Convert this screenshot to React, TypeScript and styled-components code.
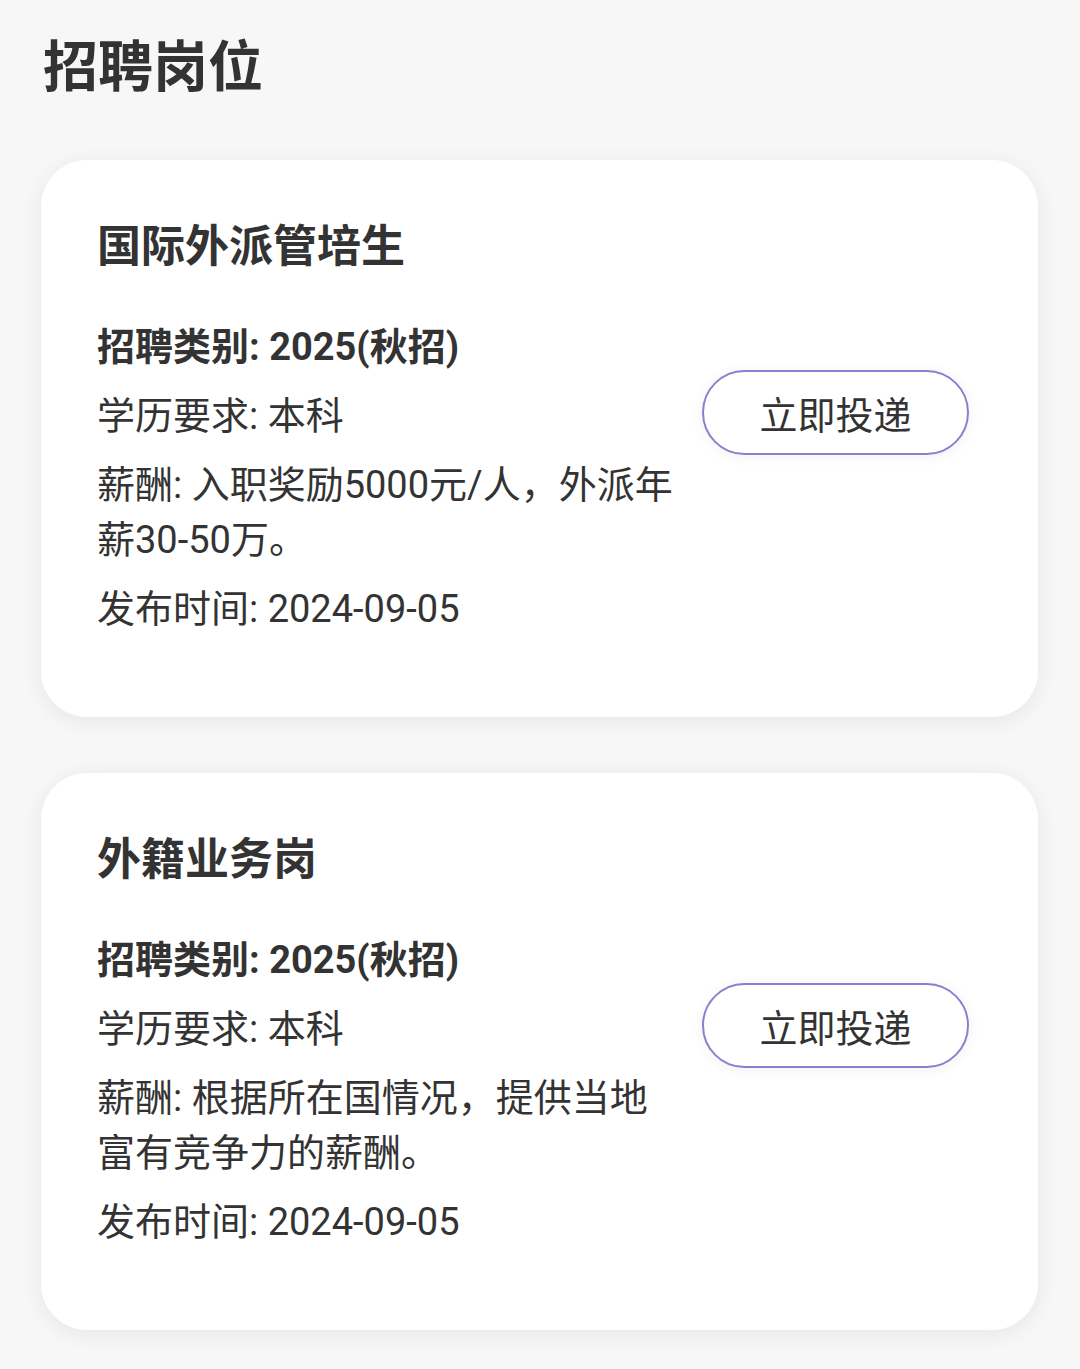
import React from "react";
import styled, { createGlobalStyle } from "styled-components";

const GlobalStyle = createGlobalStyle`
  html, body {
    margin: 0;
    padding: 0;
    background: #f7f7f7;
  }
  body {
    font-family: "Roboto", "Noto Sans CJK SC", sans-serif;
    color: #333333;
  }
`;

const Page = styled.div`
  width: 1080px;
  min-height: 1369px;
  box-sizing: border-box;
  padding: 24px 42px 39px 41px;
  background: #f7f7f7;
  display: flex;
  flex-direction: column;
`;

const PageTitle = styled.h1`
  margin: 0 0 0 2px;
  font-size: 55px;
  line-height: 76px;
  font-weight: 700;
  color: #333333;
  font-family: "Noto Sans CJK SC", sans-serif;
`;

const CardList = styled.div`
  display: flex;
  flex-direction: column;
  gap: 56px;
  margin-top: 60px;
`;

const Card = styled.section`
  background: #ffffff;
  border-radius: 46px;
  box-shadow: 0 4px 22px rgba(0, 0, 0, 0.07);
  height: 557px;
  box-sizing: border-box;
  padding: 53px 56px 0 56px;
  display: flex;
  flex-direction: column;
`;

const CardTitle = styled.h2`
  margin: 0;
  font-size: 44px;
  line-height: 60px;
  font-weight: 700;
  color: #333333;
  font-family: "Noto Sans CJK SC", sans-serif;
`;

const Body = styled.div`
  display: flex;
  align-items: flex-start;
  justify-content: space-between;
  margin-top: 47px;
`;

const Details = styled.div`
  width: 580px;
  display: flex;
  flex-direction: column;
  gap: 14px;
`;

const Line = styled.p<{ $bold?: boolean }>`
  margin: 0;
  font-size: 38px;
  line-height: 55px;
  font-weight: ${(p) => (p.$bold ? 700 : 400)};
  color: #333333;
  font-family: "Roboto", "Noto Sans CJK SC", sans-serif;
`;

const ApplyButton = styled.button`
  margin-top: 50px;
  margin-right: 13px;
  width: 267px;
  height: 85px;
  box-sizing: border-box;
  border: 2.5px solid #8782cd;
  border-radius: 43px;
  background: #ffffff;
  color: #333333;
  font-size: 38px;
  font-weight: 400;
  font-family: "Noto Sans CJK SC", sans-serif;
  display: flex;
  align-items: center;
  justify-content: center;
  padding: 0;
  box-shadow: 0 2px 14px rgba(0, 0, 0, 0.06);
  cursor: pointer;
`;

type Job = {
  title: string;
  category: string;
  education: string;
  salary: string;
  date: string;
};

const jobs: Job[] = [
  {
    title: "国际外派管培生",
    category: "2025(秋招)",
    education: "本科",
    salary: "入职奖励5000元/人，外派年薪30-50万。",
    date: "2024-09-05",
  },
  {
    title: "外籍业务岗",
    category: "2025(秋招)",
    education: "本科",
    salary: "根据所在国情况，提供当地富有竞争力的薪酬。",
    date: "2024-09-05",
  },
];

export default function App() {
  return (
    <>
      <GlobalStyle />
      <Page>
        <PageTitle>招聘岗位</PageTitle>
        <CardList>
          {jobs.map((job) => (
            <Card key={job.title}>
              <CardTitle>{job.title}</CardTitle>
              <Body>
                <Details>
                  <Line $bold>{`招聘类别: ${job.category}`}</Line>
                  <Line>{`学历要求: ${job.education}`}</Line>
                  <Line>{`薪酬: ${job.salary}`}</Line>
                  <Line>{`发布时间: ${job.date}`}</Line>
                </Details>
                <ApplyButton>立即投递</ApplyButton>
              </Body>
            </Card>
          ))}
        </CardList>
      </Page>
    </>
  );
}
